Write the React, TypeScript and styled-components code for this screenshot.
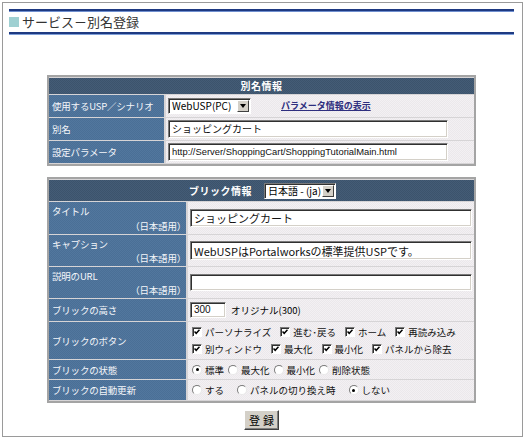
import styled, { createGlobalStyle } from 'styled-components'

const GlobalStyle = createGlobalStyle`
  html, body {
    margin: 0;
    padding: 0;
    background: #ffffff;
  }
  body {
    font-family: 'Noto Sans CJK JP', 'Noto Sans', sans-serif;
    font-size: 9.5px;
    color: #000;
  }
`

const Frame = styled.div`
  margin: 2px;
  width: 521px;
  height: 435px;
  box-sizing: border-box;
  border: 1px solid #9a9a9a;
  padding: 6px 8px 0 6px;
`

const Header = styled.div`
  display: flex;
  align-items: center;
  gap: 3px;
  height: 21px;
  border-top: 2px solid #1e3a82;
  border-bottom: 2px solid #1e3a82;
  box-shadow: inset 0 1px 0 #6f8fcf, 0 1px 0 #7f9fd8;
`

const TitleMark = styled.span`
  width: 10px;
  height: 10px;
  background: #9fd0d2;
`

const Title = styled.h1`
  margin: 0;
  font-size: 13px;
  font-weight: normal;
  color: #333;
  line-height: 1;
`

const Table = styled.table<{ $top: number }>`
  width: 429px;
  margin: ${(p) => p.$top}px auto 0;
  table-layout: fixed;
  border: 2px solid #a4a4a4;
  border-collapse: separate;
  border-spacing: 0 1px;
  background: #d6d4d6;
  font-size: 9.5px;
  line-height: 12px;
  white-space: nowrap;
`

const Col = styled.col<{ $w: number }>`
  width: ${(p) => p.$w}px;
`

const HeadCell = styled.th<{ $h: number }>`
  height: ${(p) => p.$h}px;
  padding: 0;
  background: repeating-conic-gradient(#3c536c 0 25%, #445c76 0 50%) 0 0 / 2px 2px;
  color: #fff;
  font-weight: bold;
  font-size: 10px;
  text-align: center;
  letter-spacing: 0.5px;
`

const HeadInner = styled.div`
  display: flex;
  align-items: center;
  gap: 12px;
  padding-left: 140px;
`

const Label = styled.td<{ $h: number }>`
  height: ${(p) => p.$h}px;
  padding: 0 0 0 3px;
  box-sizing: border-box;
  background: repeating-conic-gradient(#4a6f96 0 25%, #52779e 0 50%) 0 0 / 2px 2px;
  color: #f4f6fa;
  border-right: 2px solid #d6d4d6;
  vertical-align: middle;
  letter-spacing: -0.2px;
  overflow: hidden;
`

const StackLabel = styled.div`
  display: flex;
  flex-direction: column;
  height: 100%;
  justify-content: space-between;
  padding: 3px 0 2px 0;
  box-sizing: border-box;
`

const Lang = styled.span`
  align-self: flex-end;
`

const Value = styled.td`
  padding: 0 2px;
  background: repeating-conic-gradient(#f3f0f3 0 25%, #ebe8eb 0 50%) 0 0 / 2px 2px;
  vertical-align: middle;
  overflow: hidden;
`

const Row = styled.div<{ $gap?: number; $pad?: number }>`
  display: flex;
  align-items: center;
  gap: ${(p) => p.$gap ?? 0}px;
  padding-left: ${(p) => p.$pad ?? 0}px;
`

const Lines = styled.div`
  display: flex;
  flex-direction: column;
  gap: 5px;
`

const TextBox = styled.div<{ $w: number; $h: number; $font?: string; $size?: number }>`
  width: ${(p) => p.$w}px;
  height: ${(p) => p.$h}px;
  box-sizing: border-box;
  background: #fff;
  border: 1px solid;
  border-color: #7a7a7a #fff #fff #7a7a7a;
  box-shadow: inset 1px 1px 0 #303030, inset -1px -1px 0 #d4d0c8;
  padding: 0 3px;
  display: flex;
  align-items: center;
  font-family: ${(p) => p.$font ?? "'Noto Sans CJK JP', sans-serif"};
  font-size: ${(p) => p.$size ?? 11}px;
  color: #111;
  white-space: nowrap;
  overflow: hidden;
`

const Select = styled.div<{ $w: number }>`
  display: flex;
  align-items: center;
  justify-content: space-between;
  flex: none;
  width: ${(p) => p.$w}px;
  height: 16px;
  box-sizing: border-box;
  background: #fff;
  border: 1px solid;
  border-color: #7a7a7a #fff #fff #7a7a7a;
  box-shadow: inset 1px 1px 0 #303030;
  padding: 1px 1px 1px 3px;
  font-size: 10px;
  color: #000;
  font-weight: normal;
  letter-spacing: 0;
`

const DropButton = styled.span`
  width: 12px;
  height: 12px;
  box-sizing: border-box;
  background: #d4d0c8;
  border: 1px solid;
  border-color: #fff #404040 #404040 #fff;
  display: flex;
  align-items: center;
  justify-content: center;
`

const Arrow = styled.span`
  width: 0;
  height: 0;
  border-left: 3.5px solid transparent;
  border-right: 3.5px solid transparent;
  border-top: 4px solid #000;
`

const Link = styled.a`
  margin-left: 30px;
  color: #2e2e7e;
  font-weight: bold;
  font-size: 9px;
  text-decoration: underline;
`

const Option = styled.label`
  display: inline-flex;
  align-items: center;
  gap: 3px;
  white-space: nowrap;
  color: #111;
`

const Box = styled.span`
  width: 10px;
  height: 10px;
  box-sizing: border-box;
  background: #fff;
  border: 1px solid;
  border-color: #7a7a7a #fff #fff #7a7a7a;
  box-shadow: inset 1px 1px 0 #303030;
  display: inline-flex;
  align-items: center;
  justify-content: center;
`

const Radio = styled.span<{ $on: boolean }>`
  width: 10px;
  height: 10px;
  box-sizing: border-box;
  border-radius: 50%;
  background: #fff;
  border: 1px solid;
  border-color: #7a7a7a #e8e8e8 #e8e8e8 #7a7a7a;
  display: inline-flex;
  align-items: center;
  justify-content: center;
  &::after {
    content: '';
    width: 3px;
    height: 3px;
    border-radius: 50%;
    background: ${(p) => (p.$on ? '#000' : 'transparent')};
  }
`

const Footer = styled.div`
  display: flex;
  justify-content: center;
  margin-top: 7px;
`

const Submit = styled.button`
  width: 35px;
  height: 20px;
  padding: 0;
  background: #d4d0c8;
  border: 1px solid;
  border-color: #fff #404040 #404040 #fff;
  box-shadow: inset -1px -1px 0 #808080;
  font-family: 'Noto Sans CJK JP', sans-serif;
  font-size: 11px;
  letter-spacing: 3px;
  text-indent: 3px;
  color: #000;
`

function Check({ text }: { text: string }) {
  return (
    <Option>
      <Box>
        <svg width='6' height='6' viewBox='0 0 6 6'>
          <path d='M0.5 2.5 L2.2 4.3 L5.5 0.8' fill='none' stroke='#000' strokeWidth='1.5' />
        </svg>
      </Box>
      {text}
    </Option>
  )
}

function Choice({ text, on }: { text: string; on?: boolean }) {
  return (
    <Option>
      <Radio $on={!!on} />
      {text}
    </Option>
  )
}

function DropDown({ text, width }: { text: string; width: number }) {
  return (
    <Select $w={width}>
      {text}
      <DropButton>
        <Arrow />
      </DropButton>
    </Select>
  )
}

const buttonRows = [
  ['パーソナライズ', '進む･戻る', 'ホーム', '再読み込み'],
  ['別ウィンドウ', '最大化', '最小化', 'パネルから除去'],
]

export default function App() {
  return (
    <>
      <GlobalStyle />
      <Frame>
        <Header>
          <TitleMark />
          <Title>サービス－別名登録</Title>
        </Header>

        <Table $top={41}>
          <colgroup>
            <Col $w={117} />
            <Col $w={308} />
          </colgroup>
          <tbody>
            <tr>
              <HeadCell $h={16} colSpan={2}>
                別名情報
              </HeadCell>
            </tr>
            <tr>
              <Label $h={22}>使用するUSP／シナリオ</Label>
              <Value>
                <Row>
                  <DropDown text='WebUSP(PC)' width={83} />
                  <Link>パラメータ情報の表示</Link>
                </Row>
              </Value>
            </tr>
            <tr>
              <Label $h={22}>別名</Label>
              <Value>
                <TextBox $w={280} $h={18} $size={10}>
                  ショッピングカート
                </TextBox>
              </Value>
            </tr>
            <tr>
              <Label $h={22}>設定パラメータ</Label>
              <Value>
                <TextBox $w={280} $h={18} $font="'Liberation Sans', Arial, sans-serif" $size={9.4}>
                  http://Server/ShoppingCart/ShoppingTutorialMain.html
                </TextBox>
              </Value>
            </tr>
          </tbody>
        </Table>

        <Table $top={11}>
          <colgroup>
            <Col $w={139} />
            <Col $w={286} />
          </colgroup>
          <tbody>
            <tr>
              <HeadCell $h={21} colSpan={2}>
                <HeadInner>
                  ブリック情報
                  <DropDown text='日本語 - (ja)' width={72} />
                </HeadInner>
              </HeadCell>
            </tr>
            <tr>
              <Label $h={32}>
                <StackLabel>
                  タイトル
                  <Lang>（日本語用）</Lang>
                </StackLabel>
              </Label>
              <Value>
                <TextBox $w={282} $h={18}>
                  ショッピングカート
                </TextBox>
              </Value>
            </tr>
            <tr>
              <Label $h={31}>
                <StackLabel>
                  キャプション
                  <Lang>（日本語用）</Lang>
                </StackLabel>
              </Label>
              <Value>
                <TextBox $w={282} $h={19} $size={11}>
                  WebUSPはPortalworksの標準提供USPです。
                </TextBox>
              </Value>
            </tr>
            <tr>
              <Label $h={31}>
                <StackLabel>
                  説明のURL
                  <Lang>（日本語用）</Lang>
                </StackLabel>
              </Label>
              <Value>
                <TextBox $w={282} $h={17} />
              </Value>
            </tr>
            <tr>
              <Label $h={22}>ブリックの高さ</Label>
              <Value>
                <Row $gap={5}>
                  <TextBox $w={36} $h={16} $font="'Liberation Sans', Arial, sans-serif" $size={10}>
                    300
                  </TextBox>
                  <span>オリジナル(300)</span>
                </Row>
              </Value>
            </tr>
            <tr>
              <Label $h={37}>ブリックのボタン</Label>
              <Value>
                <Lines>
                  {buttonRows.map((line, i) => (
                    <Row key={i} $gap={9} $pad={2}>
                      {line.map((b) => (
                        <Check key={b} text={b} />
                      ))}
                    </Row>
                  ))}
                </Lines>
              </Value>
            </tr>
            <tr>
              <Label $h={19}>ブリックの状態</Label>
              <Value>
                <Row $gap={4} $pad={2}>
                  <Choice text='標準' on />
                  <Choice text='最大化' />
                  <Choice text='最小化' />
                  <Choice text='削除状態' />
                </Row>
              </Value>
            </tr>
            <tr>
              <Label $h={20}>ブリックの自動更新</Label>
              <Value>
                <Row $gap={13} $pad={2}>
                  <Choice text='する' />
                  <Choice text='パネルの切り換え時' />
                  <Choice text='しない' on />
                </Row>
              </Value>
            </tr>
          </tbody>
        </Table>

        <Footer>
          <Submit>登録</Submit>
        </Footer>
      </Frame>
    </>
  )
}
